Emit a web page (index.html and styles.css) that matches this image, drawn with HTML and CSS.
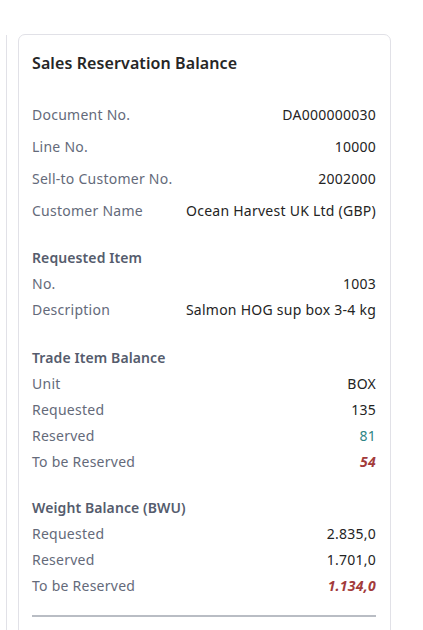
FILE: index.html
```html
<!DOCTYPE html>
<html>
<head>
<meta charset="utf-8">
<link rel="stylesheet" href="styles.css">
</head>
<body>
<div class="page">
  <div class="sidebar"></div>
  <div class="card">
    <h1 class="title">Sales Reservation Balance</h1>
    <div class="group group-main">
      <div class="row"><span class="label">Document No.</span><span class="value">DA000000030</span></div>
      <div class="row"><span class="label">Line No.</span><span class="value">10000</span></div>
      <div class="row"><span class="label">Sell-to Customer No.</span><span class="value">2002000</span></div>
      <div class="row"><span class="label">Customer Name</span><span class="value">Ocean Harvest UK Ltd (GBP)</span></div>
    </div>
    <div class="group group-item">
      <div class="heading">Requested Item</div>
      <div class="row"><span class="label">No.</span><span class="value">1003</span></div>
      <div class="row"><span class="label">Description</span><span class="value">Salmon HOG sup box 3-4 kg</span></div>
    </div>
    <div class="group group-trade">
      <div class="heading">Trade Item Balance</div>
      <div class="row"><span class="label">Unit</span><span class="value">BOX</span></div>
      <div class="row"><span class="label">Requested</span><span class="value">135</span></div>
      <div class="row"><span class="label">Reserved</span><span class="value teal">81</span></div>
      <div class="row"><span class="label">To be Reserved</span><span class="value alert">54</span></div>
    </div>
    <div class="group">
      <div class="heading">Weight Balance (BWU)</div>
      <div class="row"><span class="label">Requested</span><span class="value">2.835,0</span></div>
      <div class="row"><span class="label">Reserved</span><span class="value">1.701,0</span></div>
      <div class="row"><span class="label">To be Reserved</span><span class="value alert">1.134,0</span></div>
    </div>
    <div class="rule"></div>
  </div>
</div>
</body>
</html>
```

FILE: styles.css
```css
html, body {
  margin: 0;
  padding: 0;
  background: #ffffff;
  height: 100%;
  overflow: hidden;
}
body {
  font-family: "Noto Sans", "Open Sans", sans-serif;
  font-size: 14px;
  color: #212121;
  letter-spacing: 0.25px;
}
.page {
  display: flex;
  align-items: flex-start;
  padding-top: 34px;
  padding-left: 6px;
  height: 700px;
}
.sidebar {
  width: 1px;
  margin-top: 1px;
  height: 700px;
  background: #e1e1e7;
  margin-right: 11px;
}
.card {
  border: 1px solid #e1e1e7;
  border-radius: 7px;
  padding: 17px 14px 40px 13px;
  height: 700px;
  box-sizing: border-box;
  width: 373px;
}
.title {
  margin: 0;
  font-size: 16px;
  font-weight: 600;
  line-height: 22px;
  color: #262626;
  letter-spacing: 0.1px;
}
.group {
  margin-top: 20px;
}
.group-main {
  margin-top: 25px;
}
.group.group-item {
  margin-top: 18px;
}
.group.group-trade {
  margin-top: 22px;
}
.row {
  display: flex;
  justify-content: space-between;
  line-height: 26px;
  height: 26px;
}
.group-main .row {
  line-height: 32px;
  height: 32px;
}
.label {
  color: #646a7a;
}
.value {
  color: #242424;
}
.teal {
  color: #2e8585;
}
.alert {
  color: #a33b3b;
  font-weight: 700;
  font-style: italic;
}
.heading {
  font-weight: 600;
  color: #555c6d;
  line-height: 26px;
  height: 26px;
  letter-spacing: 0.1px;
}
.rule {
  margin-top: 16px;
  height: 2px;
  background: #b9bdc4;
}
```
